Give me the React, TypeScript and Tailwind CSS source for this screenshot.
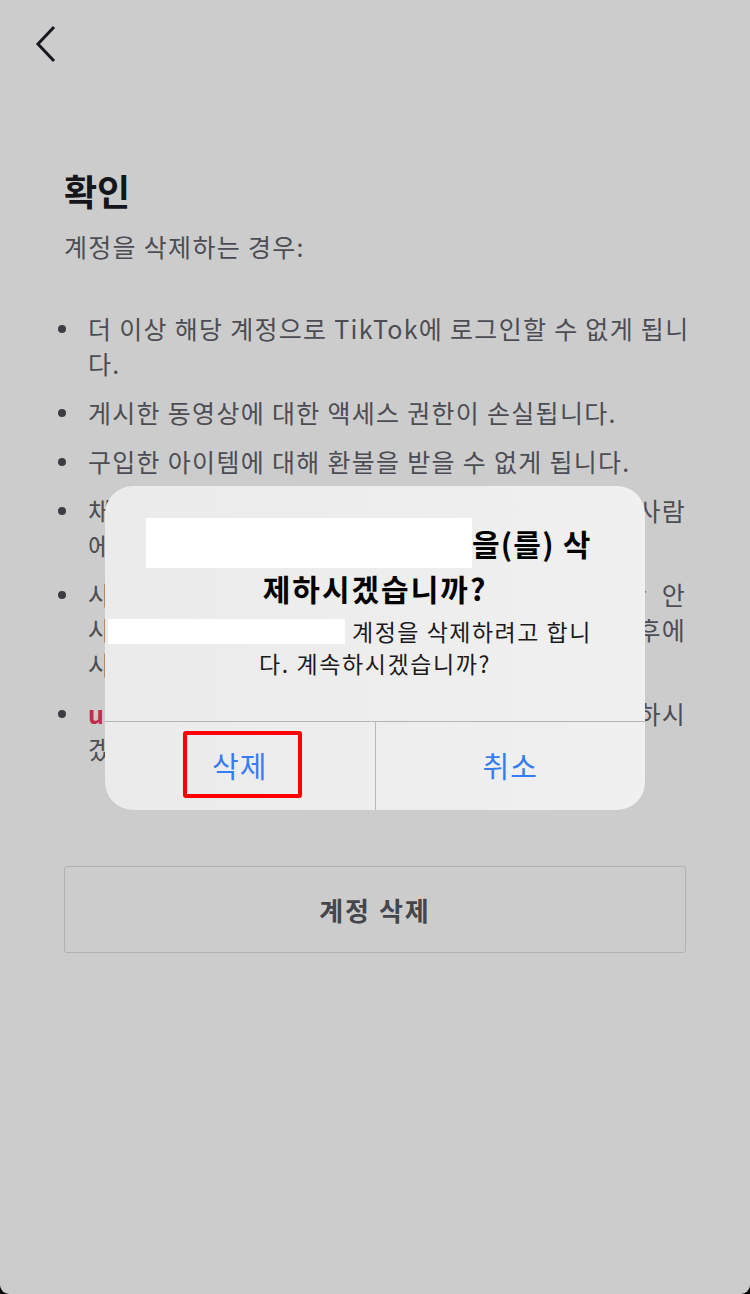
import React from "react";

type Line = { text: React.ReactNode; justify?: boolean };

const items: Line[][] = [
  [{ text: "더 이상 해당 계정으로 TikTok에 로그인할 수 없게 됩니" }, { text: "다." }],
  [{ text: "게시한 동영상에 대한 액세스 권한이 손실됩니다." }],
  [{ text: "구입한 아이템에 대해 환불을 받을 수 없게 됩니다." }],
  [
    { text: "채팅 메시지 등 일부 정보는 다른 사람", justify: true },
    { text: "에게 계속 표시될 수 있습니다." },
  ],
  [
    { text: "사용자 계정은 30일 동안 비활성화되며, 그 기간 안", justify: true },
    { text: "사용자가 다시 로그인하지 않으면 30일 후에", justify: true },
    { text: "사용자 계정이 영구적으로 삭제됩니다." },
  ],
  [
    {
      text: (
        <>
          <span className="font-bold text-[#c22c4a]">user1003792</span> 계정을 정말 삭제하시
        </>
      ),
      justify: true,
    },
    { text: "겠습니까?" },
  ],
];

const BackIcon = () => (
  <svg width="22" height="38" viewBox="0 0 22 38" fill="none" aria-hidden="true">
    <polyline points="19,2 3,19 19,36" stroke="#17181e" strokeWidth="3" strokeLinejoin="miter" />
  </svg>
);

const ConfirmDialog = () => (
  <div className="absolute left-[105px] top-[486px] w-[540px] h-[324px] rounded-[28px] bg-linear-to-r from-[#ebebeb] to-[#f0f0f0] flex flex-col overflow-hidden">
    <div className="pt-[32px] pb-[42px] flex flex-col">
      <div className="h-[50px] flex items-center pl-[41px]">
        <div className="w-[326px] h-[50px] bg-white shrink-0" />
        <span className="text-[30px] font-bold tracking-[1.2px] text-black leading-none whitespace-nowrap">
          을(를) 삭
        </span>
      </div>
      <div className="h-[40px] flex items-center justify-center">
        <span className="text-[30px] font-bold tracking-[2px] text-black leading-none">제하시겠습니까?</span>
      </div>
      <div className="mt-[7px] h-[32px] flex items-center pl-[3px] gap-[7px]">
        <div className="w-[237px] h-[25px] bg-white shrink-0" />
        <span className="text-[23px] tracking-[1.5px] text-[#1b1b1d] leading-none whitespace-nowrap">
          계정을 삭제하려고 합니
        </span>
      </div>
      <div className="h-[32px] flex items-center justify-center">
        <span className="text-[23px] tracking-[1.6px] text-[#1b1b1d] leading-none">다. 계속하시겠습니까?</span>
      </div>
    </div>
    <div className="border-t border-[#b4b4b4] flex-1 flex">
      <div className="relative flex-1 flex items-center justify-center border-r border-[#b8b8b8]">
        <span className="text-[29px] tracking-[1px] text-[#347cf4]">삭제</span>
        <div className="absolute left-[78px] top-[9px] w-[119px] h-[67px] border-4 border-[#ff0000] rounded-[3px]" />
      </div>
      <div className="flex-1 flex items-center justify-center">
        <span className="text-[29px] tracking-[1px] text-[#347cf4]">취소</span>
      </div>
    </div>
  </div>
);

export default function App() {
  return (
    <div className="w-[750px] h-[1294px] bg-black font-[Noto_Sans_CJK_KR,sans-serif]">
      <div className="relative h-full bg-[#cccccc] rounded-b-[9px] overflow-hidden">
        <div className="pl-[35px] pt-[25px]">
          <BackIcon />
        </div>

        <div className="px-[64px] mt-[107px]">
          <h1 className="text-[36px] font-bold leading-[40px] text-[#15161c]">확인</h1>
          <p className="mt-[21px] text-[25px] tracking-[1.3px] leading-[30px] text-[#4c4d54]">
            계정을 삭제하는 경우:
          </p>

          <ul className="mt-[50px] -ml-[6px] w-[628px] flex flex-col gap-[14px]">
            {items.map((lines, i) => (
              <li key={i} className="flex">
                <span className="mt-[14px] mr-[22px] w-2 h-2 rounded-full bg-[#3c3d43] shrink-0" />
                <div className="flex-1 text-[25px] tracking-[1.3px] leading-[35px] text-[#4c4d54]">
                  {lines.map((line, j) => (
                    <span
                      key={j}
                      className={
                        line.justify
                          ? "block whitespace-nowrap text-justify [text-align-last:justify]"
                          : "block whitespace-nowrap"
                      }
                    >
                      {line.text}
                    </span>
                  ))}
                </div>
              </li>
            ))}
          </ul>

          <button className="mt-[100px] w-[622px] h-[87px] border border-[#b2b2b2] rounded-[3px] flex items-center justify-center text-[26px] font-bold tracking-[2px] text-[#45464c]">
            계정 삭제
          </button>
        </div>

        <ConfirmDialog />
      </div>
    </div>
  );
}
